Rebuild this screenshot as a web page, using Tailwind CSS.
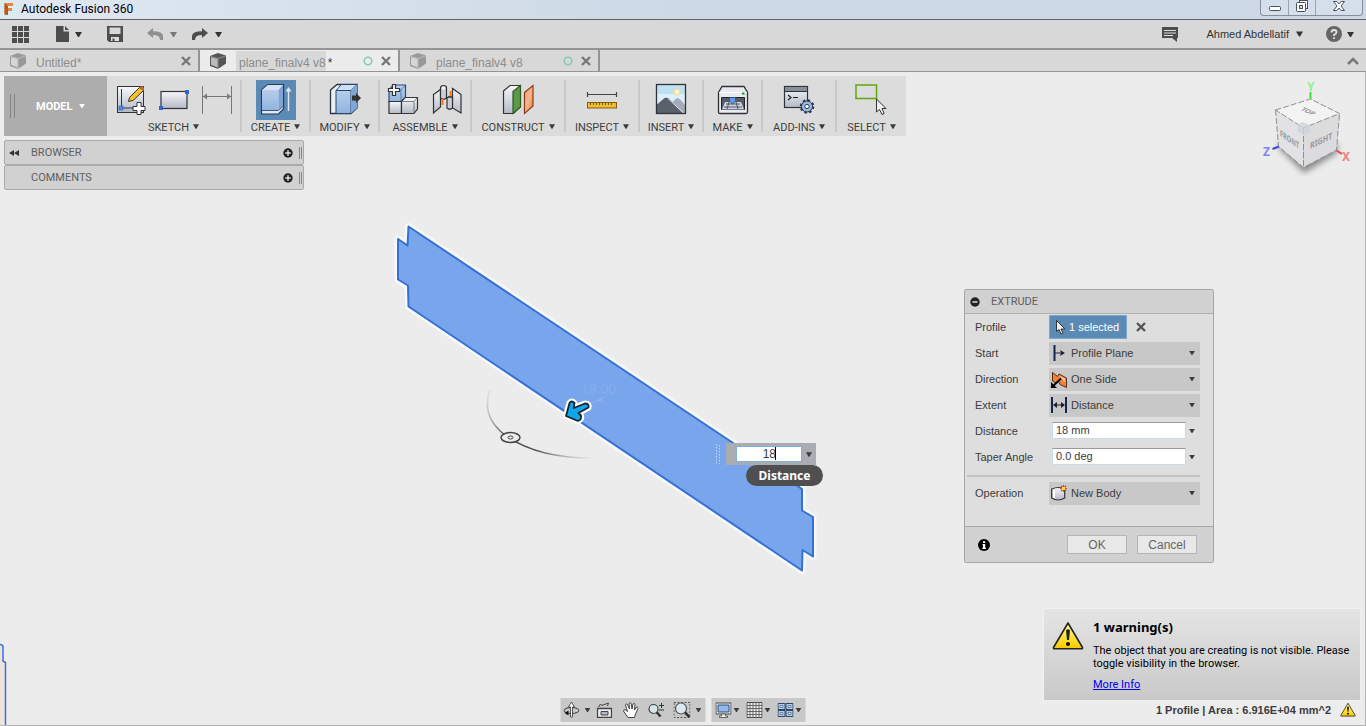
<!DOCTYPE html>
<html lang="en">
<head>
  <meta charset="UTF-8" />
  <meta name="viewport" content="width=device-width, initial-scale=1.0"/>
  <title>Autodesk Fusion 360</title>
  <script src="https://cdn.jsdelivr.net/npm/@tailwindcss/browser@4"></script>
</head>
<body class="h-screen flex flex-col overflow-hidden bg-[#ececec] text-[11px] text-[#3c3c3c] font-['Liberation_Sans',Arial,sans-serif]">

  <!-- shared symbols -->
  <svg class="absolute w-0 h-0">
    <symbol id="down" viewBox="0 0 7 5"><path d="M0 0h7L4 5H3z" fill="currentColor"/></symbol>
    <symbol id="cross" viewBox="0 0 10 10"><path d="M1 1l8 8M9 1l-8 8" stroke="currentColor" stroke-width="2.400"/></symbol>
    <symbol id="cube" viewBox="0 0 16 16">
      <path d="M0 3L8 0l8 2.500v8L8 16l-8-3z" fill="currentColor"/>
      <path d="M1 4.200l6.500 1.800v8.500L1 11.800z" fill="#fff" opacity=".6"/>
      <path d="M.5 3.500L8 5.500l7.500-2.500M8 5.500V16" stroke="#fff" stroke-opacity=".35" fill="none"/>
    </symbol>
    <symbol id="plus" viewBox="0 0 10 10"><circle cx="5" cy="5" r="4.700" fill="#222"/><path d="M5 2.200v5.600M2.200 5h5.600" stroke="#ddd" stroke-width="1.500"/></symbol>
    <symbol id="warn" viewBox="0 0 32 28">
      <path d="M16 1.500L30.500 26q.3 1.200-1 1.200h-27q-1.300 0-1-1.200z" fill="url(#yellow)" stroke="#222" stroke-width="1.600" stroke-linejoin="round"/>
      <path d="M14 9q2-2.500 4 0l-1 9.500h-2z" fill="#222"/><circle cx="16" cy="22.500" r="2.100" fill="#111"/>
    </symbol>
    <defs>
      <linearGradient id="yellow" x1="0" y1="0" x2="0" y2="1"><stop offset="0" stop-color="#fff7a0"/><stop offset=".6" stop-color="#ffe030"/><stop offset="1" stop-color="#f8c800"/></linearGradient>
      <linearGradient id="steel" x1="0" y1="0" x2="0" y2="1"><stop offset="0" stop-color="#f6f7fb"/><stop offset="1" stop-color="#b4b9c6"/></linearGradient>
      <linearGradient id="blue" x1="0" y1="0" x2="0" y2="1"><stop offset="0" stop-color="#b7cdec"/><stop offset="1" stop-color="#8fb5dd"/></linearGradient>
      <linearGradient id="orange" x1="0" y1="0" x2="1" y2="1"><stop offset="0" stop-color="#f0a070"/><stop offset=".5" stop-color="#f8b58c"/><stop offset="1" stop-color="#e67a3c"/></linearGradient>
    </defs>
  </svg>

  <!-- title bar -->
  <header class="shrink-0 flex items-start justify-between h-5 border-b border-[#5f6166] bg-linear-to-r from-[#dfe8f2] via-[#cdd9e6] to-[#ccd8e6] pr-[3px]">
    <div class="flex items-center gap-[5px] h-[18px]">
      <svg class="w-4 h-4 bg-[#d9ecf5]" viewBox="0 0 16 16"><path d="M4.500 2h8.500v3H8v2h4v3H8v4H4.500z" fill="#e8873a"/><path d="M4.500 2L8 5v9l-3.500-1z" fill="#b9581c"/></svg>
      <h1 class="text-xs text-black font-[Roboto,sans-serif]">Autodesk Fusion 360</h1>
    </div>
    <div class="flex h-4 rounded-b border border-t-0 border-[#868e9a] bg-[#d5dfeb]">
      <button class="w-7 h-full flex justify-center border-r border-[#9aa3b0]" aria-label="Minimize"><svg class="w-3 h-4" viewBox="0 0 12 16"><rect x=".5" y="6.500" width="11" height="4" rx="1" fill="#fff" stroke="#4b5057"/></svg></button>
      <button class="w-[27px] h-full flex justify-center border-r border-[#9aa3b0]" aria-label="Restore"><svg class="w-3 h-4" viewBox="0 0 12 16"><rect x="3.500" y="0.500" width="8" height="8" fill="#fff" stroke="#4b5057"/><rect x=".5" y="2.500" width="9" height="9" rx="1" fill="#fff" stroke="#4b5057"/><rect x="3.500" y="5.500" width="3" height="3" fill="#d5dfeb" stroke="#4b5057"/></svg></button>
      <button class="w-[46px] h-full flex justify-center" aria-label="Close"><svg class="w-3 h-4" viewBox="0 0 12 16"><path d="M.5 1.500h3.300L6 4l2.200-2.500h3.300L8 6l3.500 4.500H8.200L6 8l-2.200 2.500H.5L4 6z" fill="#fff" stroke="#4b5057"/></svg></button>
    </div>
  </header>

  <!-- application bar -->
  <nav class="shrink-0 flex items-center justify-between h-[30px] border-b-2 border-[#949494] bg-[#d8d8d8] px-3 text-[#333]">
    <div class="flex items-center">
      <button aria-label="Data panel"><svg class="w-[17px] h-[17px]" viewBox="0 0 17 17" fill="#4d4d4d"><path d="M0 0h5v5H0zM6 0h5v5H6zM12 0h5v5h-5zM0 6h5v5H0zM6 6h5v5H6zM12 6h5v5h-5zM0 12h5v5H0zM6 12h5v5H6zM12 12h5v5h-5z"/></svg></button>
      <button class="flex items-center gap-1.5 ml-[27px]" aria-label="File"><svg class="w-[13px] h-4" viewBox="0 0 13 16"><path d="M0 0h7.500v5.500H13V16H0zM9 0l4 4H9z" fill="#4d4d4d"/></svg><svg class="w-[7px] h-[5px]"><use href="#down"/></svg></button>
      <button class="ml-[25px]" aria-label="Save"><svg class="w-4 h-4" viewBox="0 0 16 16"><path d="M0 0h16v16H2l-2-2z" fill="#4d4d4d"/><path d="M2.500 1.500h11V8h-11z" fill="#d8d8d8"/><path d="M4 11h8v4H4z" fill="#ddd"/><path d="M5.500 12.500h2v2.500h-2z" fill="#4d4d4d"/></svg></button>
      <button class="flex items-center gap-[7px] ml-6 text-[#777]" aria-label="Undo"><svg class="w-4 h-3" viewBox="0 0 16 12"><path d="M0 5l6-5v3.200q10 0 10 4.800v4h-3q0-5-7-5v3z" fill="#909090"/></svg><svg class="w-[7px] h-[5px]"><use href="#down"/></svg></button>
      <button class="flex items-center gap-[7px] ml-[15px]" aria-label="Redo"><svg class="w-4 h-3" viewBox="0 0 16 12"><path d="M16 5l-6-5v3.200Q0 3.200 0 8v4h3q0-5 7-5v3z" fill="#4d4d4d"/></svg><svg class="w-[7px] h-[5px]"><use href="#down"/></svg></button>
    </div>
    <div class="flex items-center">
      <button aria-label="Notifications"><svg class="w-4 h-[15px]" viewBox="0 0 16 15"><path d="M0 0h16v11h-1v4l-5-4H0z" fill="#4d4d4d"/><path d="M2 3.500h12M2 6h12M2 8.500h9" stroke="#ddd"/></svg></button>
      <button class="flex items-center gap-[7px] ml-7">Ahmed Abdellatif <svg class="w-[7px] h-[6px]"><use href="#down"/></svg></button>
      <button class="flex items-center gap-[5px] ml-[23px]" aria-label="Help"><svg class="w-4 h-4" viewBox="0 0 16 16"><circle cx="8" cy="8" r="8" fill="#666"/><path d="M5.500 6.500Q5.500 4 8 4t2.500 2.300Q10.500 7.500 8 9v1M8 11.200v1.800" fill="none" stroke="#e2e2e2" stroke-width="1.800"/></svg><svg class="w-[7px] h-[5px]"><use href="#down"/></svg></button>
    </div>
  </nav>

  <!-- document tabs -->
  <div class="shrink-0 flex h-[22px] border-b border-[#949494] bg-[#d8d8d8] text-xs text-[#8c8c8c]">
    <div class="flex items-center w-[200px] border-r-2 border-[#949494] pl-[10px] pr-[7px]">
      <svg class="w-4 h-4 text-[#999]"><use href="#cube"/></svg>
      <a href="#" class="ml-[10px] pt-1">Untitled*</a>
      <button class="ml-auto text-[#777]" aria-label="Close tab"><svg class="w-[10px] h-[10px]"><use href="#cross"/></svg></button>
    </div>
    <div class="flex items-center w-[200px] border-r-2 border-[#949494] bg-[#ececec] pl-[10px] pr-[7px]">
      <svg class="w-4 h-4 text-[#555]"><use href="#cube"/></svg>
      <a href="#" class="ml-[10px] flex"><span class="bg-[#d8d8d8] pt-1 pl-[3px]">plane_finalv4 v8</span><span class="pt-1 pl-0.5 text-[#333]">*</span></a>
      <svg class="ml-auto w-[10px] h-[10px]" viewBox="0 0 10 10"><circle cx="5" cy="5" r="3.800" fill="none" stroke="#7fcbb8" stroke-width="1.500"/></svg>
      <button class="ml-2 text-[#777]" aria-label="Close tab"><svg class="w-[10px] h-[10px]"><use href="#cross"/></svg></button>
    </div>
    <div class="flex items-center w-[200px] border-r-2 border-[#949494] pl-[10px] pr-[7px]">
      <svg class="w-4 h-4 text-[#999]"><use href="#cube"/></svg>
      <a href="#" class="ml-[10px] pt-1">plane_finalv4 v8</a>
      <svg class="ml-auto w-[10px] h-[10px]" viewBox="0 0 10 10"><circle cx="5" cy="5" r="3.800" fill="none" stroke="#7fcbb8" stroke-width="1.500"/></svg>
      <button class="ml-2 text-[#777]" aria-label="Close tab"><svg class="w-[10px] h-[10px]"><use href="#cross"/></svg></button>
    </div>
    <button class="ml-auto mr-[7px]" aria-label="Collapse"><svg class="w-3 h-2" viewBox="0 0 12 8"><path d="M1 7l5-5 5 5" fill="none" stroke="#777" stroke-width="2.600"/></svg></button>
  </div>

  <!-- canvas -->
  <main class="relative grow min-h-0 overflow-hidden border-r border-b border-[#b4b4b4] p-1">

    <!-- model view -->
    <svg class="absolute inset-0 w-full h-full">
      <g transform="translate(0 -72)">
        <path d="M0 644l3 2v15l2.500 1.500V728H0z" fill="#ede4d9"/>
        <path d="M0 644l3 2v15l2.500 1.500V728" fill="none" stroke="#3f6fe0" stroke-width="1.500"/>
        <g stroke-linejoin="round">
          <path d="M408.500 226.500L802 489v21.500l11 6.500v39.500l-10.500-6.500-.5 20.500L408.500 306.500l-.5-21-10-6v-40.500l9.500 6.500z" fill="#fff" stroke="#f8f8fa" stroke-width="7"/>
          <path d="M408.500 226.500L802 489v21.500l11 6.500v39.500l-10.500-6.500-.5 20.500L408.500 306.500l-.5-21-10-6v-40.500l9.500 6.500z" fill="#78a5ec" stroke="#3472d2" stroke-width="2"/>
        </g>
        <text x="581" y="394" font-size="14" fill="#87aeed">18.00</text>
        <path d="M588 405l17-8" stroke="#8db3f0"/>
        <path d="M595 401l6-3 1 3z" fill="#8db3f0"/>
        <linearGradient id="arc" gradientUnits="userSpaceOnUse" x1="488" y1="390" x2="590" y2="458"><stop offset="0" stop-color="#888" stop-opacity=".1"/><stop offset=".35" stop-color="#444"/><stop offset=".6" stop-color="#555"/><stop offset="1" stop-color="#999" stop-opacity=".1"/></linearGradient>
        <path d="M490 390Q481 415 503 433.500Q535 458 592 458" fill="none" stroke="url(#arc)" stroke-width="1.500"/>
        <ellipse cx="510.500" cy="437.500" rx="9.500" ry="5" fill="#ececec" stroke="#444" stroke-width="1.500"/>
        <ellipse cx="510.500" cy="437.500" rx="2.500" ry="1.500" fill="none" stroke="#444"/>
        <path d="M566 416L569.500 403q2-3 5 0l-.8 5L585 403.500q4.500 0 3.500 4L578.500 413l2.500 2.500q1 4-3 5.500z" fill="#fff" stroke="#fff" stroke-width="6" stroke-linejoin="round"/>
        <path d="M566 416L569.500 403q2-3 5 0l-.8 5L585 403.500q4.500 0 3.500 4L578.500 413l2.500 2.500q1 4-3 5.500z" fill="#0fa5e9" stroke="#15242e" stroke-width="1.800" stroke-linejoin="round"/>
      </g>
    </svg>

    <!-- view cube -->
    <svg class="absolute top-1 right-[10px] w-[95px] h-[110px]" viewBox="1260 76 95 110">
      <filter id="soft"><feGaussianBlur stdDeviation="3"/></filter>
      <path d="M1279 148l25 25 33-20v-10h-58z" fill="#888" filter="url(#soft)"/>
      <path d="M1275.500 110l35-11 29 14.500-36 14.500z" fill="#f3f3f3"/>
      <path d="M1275.500 110l28 18v39.500l-25-21z" fill="#e2e2e4"/>
      <path d="M1339.500 113.500l-36 14.500v39.500l33-17.500z" fill="#dcdcde"/>
      <path d="M1275.500 110l35-11 29 14.500-36 14.500zM1275.500 110l3 36.500 25 21 33-17.500 3-36.500M1303.500 128v39.500" fill="none" stroke="#909090" stroke-dasharray="6 2"/>
      <path d="M1297.500 124l5.500-2 7 3v8l-6 2-6.500-3.500z" fill="#cfd3da" opacity=".8"/>
      <g font-family="Noto Sans,sans-serif" font-weight="bold" font-size="8" fill="#999">
        <text transform="matrix(.7 .48 0 1.100 1280 136)">FRONT</text>
        <text transform="matrix(.9 -.42 0 1.100 1310 149)">RIGHT</text>
        <text transform="matrix(.8 .35 -.7 .5 1300 110)">TOP</text>
      </g>
      <path d="M1310.500 99v-7" stroke="#3fe03f" stroke-width="2"/>
      <path d="M1279 146.500l-6.500 2.500" stroke="#4444dd" stroke-width="2"/>
      <path d="M1336.500 150.500l5.500 3.500" stroke="#ee4444" stroke-width="2"/>
      <g font-family="Noto Sans,sans-serif" font-size="12" font-weight="bold">
        <text x="1307" y="91" fill="#8af58a">Y</text><text x="1263" y="156" fill="#8484f0">Z</text><text x="1342" y="161" fill="#f58080">X</text>
      </g>
    </svg>

    <!-- ribbon -->
    <div class="relative w-fit flex h-[60px] bg-[#dcdcdc] font-[Roboto,sans-serif]">
      <button class="flex items-center w-[103px] bg-[#adadad] text-white font-bold pl-1.5">
        <span class="w-[5px] h-6 border-x border-[#858585]"></span>
        <span class="ml-[21px] pt-0.5">MODEL</span><svg class="ml-[6px] w-[6px] h-1"><use href="#down"/></svg>
      </button>
      <div class="flex flex-col items-center w-[133px] my-1">
        <div class="flex gap-2">
          <svg class="w-9 h-10" viewBox="0 0 36 40">
            <rect x="5.500" y="6.500" width="26" height="26" fill="url(#steel)" stroke="#2f3238"/>
            <path d="M9.500 9v19H29" fill="none" stroke="#333"/><rect x="7" y="26" width="4" height="4" fill="#4a90e8" stroke="#1c4fa0" stroke-width=".5"/>
            <path d="M16.500 21.500l1-4L28 7l3.500 3.500L21 20.500z" fill="#f3c42c" stroke="#3c3020"/><path d="M27 8l1.500-1.500q2-1 3 .5t.5 3L31 11z" fill="#b96a30"/>
            <path d="M25 22.500h4v4h4v4h-4v4h-4v-4h-4v-4h4z" fill="#fff" stroke="#333"/>
          </svg>
          <svg class="w-9 h-10" viewBox="0 0 36 40"><rect x="5" y="11.500" width="26" height="17" fill="url(#steel)" stroke="#2f3238" stroke-width="1.200"/><path d="M29 10h4v4h-4zM3 26h4v4H3z" fill="#2f66d0"/></svg>
          <svg class="w-9 h-10" viewBox="0 0 36 40"><path d="M2.500 6v28M31.500 6v28M3 16.500h28" stroke="#777"/><path d="M3 16.500l4-3v6zM31 16.500l-4-3v6z" fill="#777"/></svg>
        </div>
        <button class="flex items-start gap-1 leading-4">SKETCH <svg class="mt-1 w-[6px] h-[5px]"><use href="#down"/></svg></button>
      </div>
      <div class="flex flex-col items-center w-[69px] my-1 border-l-2 border-[#c9c9c9]">
        <svg class="shrink-0 w-10 h-10 bg-[#5b8bb5]" viewBox="0 0 40 40">
          <path d="M5.500 10L12 4.500h15.500V29l-5 5h-17z" fill="#e4e7ee" stroke="#223c66" stroke-width="1.200"/>
          <path d="M6 10l6-5h15l-4.500 5z" fill="#d4e2f6"/><path d="M6 10h16.500v20H6z" fill="url(#blue)"/><path d="M22.500 10L27 5v21l-4.500 4z" fill="#7da4d2"/><path d="M6 30.500h16.500l5-4.500" fill="none" stroke="#3a5580"/>
          <path d="M32.500 31V10" stroke="#e2e6ec" stroke-width="1.500"/><path d="M32.500 7l3 4.500h-6z" fill="#e2e6ec"/>
        </svg>
        <button class="flex items-start gap-1 leading-4">CREATE <svg class="mt-1 w-[6px] h-[5px]"><use href="#down"/></svg></button>
      </div>
      <div class="flex flex-col items-center w-[69px] my-1 border-l-2 border-[#c9c9c9]">
        <svg class="shrink-0 w-10 h-10" viewBox="0 0 40 40">
          <path d="M5.500 10L12 4.500h20V28l-6 5.500H5.500z" fill="#eceef3" stroke="#2b3442" stroke-width="1.300"/>
          <path d="M11 10.500l5.500-6H32L26 10.500z" fill="#cfe0f5" stroke="#27466f"/><path d="M11 10.500h15v23H11z" fill="url(#blue)" stroke="#27466f"/><path d="M26 10.500l6-6V28l-6 5.500z" fill="#7fa6d6"/>
          <path d="M27 15.500h4V13l5 5-5 5v-2.500h-4z" fill="#333"/>
        </svg>
        <button class="flex items-start gap-1 leading-4">MODIFY <svg class="mt-1 w-[6px] h-[5px]"><use href="#down"/></svg></button>
      </div>
      <div class="flex flex-col items-center w-[92px] my-1 border-l-2 border-[#c9c9c9]">
        <div class="flex gap-1">
          <svg class="w-10 h-10" viewBox="0 0 40 40" stroke-width="1.200">
            <path d="M6 10l4-5h12.500v13L18 22H6z" fill="url(#blue)" stroke="#2a4a86"/><path d="M18 10l4.500-5M18 10v12M6 10h12" stroke="#2a4a86" fill="none" stroke-width=".6"/>
            <path d="M6 21.500h12.500v12H6z" fill="url(#steel)" stroke="#333"/><path d="M18.500 21.500L22 17.500h12.500V29L31 33.500H18.500z" fill="url(#steel)" stroke="#333"/><path d="M18.500 21.500H31v12M31 21.500l3.500-4" fill="none" stroke="#666" stroke-width=".8"/>
            <path d="M9.500 4.500h3v4h4v3h-4v4h-3v-4h-4v-3h4z" fill="#fff" stroke="#333"/>
          </svg>
          <svg class="w-10 h-10" viewBox="0 0 40 40" stroke="#333" stroke-width="1.200">
            <path d="M6.500 14.500l7-5v17.500l-7 6z" fill="url(#steel)"/><path d="M13.500 8q0-2.500 3-2.500t3 2.500v10q-3 2.500-6 0z" fill="#c9ced8"/>
            <path d="M34 14.500l-8.500-6V28l8.500 5z" fill="url(#steel)"/><path d="M20 18q3-2.500 5.500 0v10q-3 2.500-5.500 0z" fill="#c9ced8"/>
            <path d="M15.500 19v6M23.500 11v5" stroke="#f0781e" stroke-width="2"/><circle cx="16.500" cy="8" r="1.500" fill="#fff" stroke="none"/>
          </svg>
        </div>
        <button class="flex items-start gap-1 leading-4">ASSEMBLE <svg class="mt-1 w-[6px] h-[5px]"><use href="#down"/></svg></button>
      </div>
      <div class="flex flex-col items-center w-[94px] my-1 border-l-2 border-[#c9c9c9]">
        <svg class="shrink-0 w-10 h-10" viewBox="0 0 40 40" stroke-width="1.200">
          <path d="M5.500 11L12 5.500h10V27l-6.500 6.500h-10z" fill="url(#steel)" stroke="#333"/><path d="M15 11.500l7.500-6V27L15 33.500z" fill="#5a9a48" stroke="#2c5a20"/>
          <path d="M26.500 12.500L35 5.500V26l-8.500 7.500z" fill="url(#orange)" stroke="#8a3c18"/>
        </svg>
        <button class="flex items-start gap-1 leading-4">CONSTRUCT <svg class="mt-1 w-[6px] h-[5px]"><use href="#down"/></svg></button>
      </div>
      <div class="flex flex-col items-center w-[74px] my-1 border-l-2 border-[#c9c9c9]">
        <svg class="shrink-0 w-10 h-10" viewBox="0 0 40 40"><path d="M5.500 12v5M34.500 12v5M5.500 14.500h29" stroke="#444" stroke-width="1.200"/><rect x="5.500" y="22.500" width="29" height="5.500" fill="#eebd35" stroke="#835c12"/><path d="M8.500 23v2M11.500 23v2M14.500 23v2M17.500 23v2M20.500 23v2M23.500 23v2M26.500 23v2M29.500 23v2" stroke="#835c12"/></svg>
        <button class="flex items-start gap-1 leading-4">INSPECT <svg class="mt-1 w-[6px] h-[5px]"><use href="#down"/></svg></button>
      </div>
      <div class="flex flex-col items-center w-[64px] my-1 border-l-2 border-[#c9c9c9]">
        <svg class="shrink-0 w-10 h-10" viewBox="0 0 40 40">
          <rect x="5.500" y="4.500" width="29" height="29" fill="#bfe0f3"/><path d="M5.500 14h29v10h-29z" fill="#dceffa"/><circle cx="26" cy="12" r="3" fill="#fff6cc" stroke="#f5d77c"/>
          <path d="M17 26l9-8q3 0 8.500 8v7.500H17z" fill="#a3acb8"/><path d="M5.500 25l8-7q3-1 5 1l14 14.500H5.500z" fill="#59616d"/><path d="M17 18.500l16 15" stroke="#e5eaf0"/>
          <rect x="5.500" y="4.500" width="29" height="29" fill="none" stroke="#2f3238" stroke-width="1.300"/>
        </svg>
        <button class="flex items-start gap-1 leading-4">INSERT <svg class="mt-1 w-[6px] h-[5px]"><use href="#down"/></svg></button>
      </div>
      <div class="flex flex-col items-center w-[59px] my-1 border-l-2 border-[#c9c9c9]">
        <svg class="shrink-0 w-10 h-10" viewBox="0 0 40 40">
          <path d="M9 6.500h22l3.500 6V32q0 1.500-1.500 1.500H7q-1.500 0-1.500-1.500V12.500z" fill="#e8eaf0" stroke="#2f3238" stroke-width="1.300"/><path d="M6 12.500h28" stroke="#fff"/><path d="M29 12.500h2.500v2H29z" fill="#1f9a1f"/>
          <path d="M8.500 17.500h23v12h-23z" fill="#555b66" stroke="#222"/><path d="M12 22h16l3 7.500H9z" fill="#cdd5e2"/><path d="M16.500 17.500h6v4L19.500 24l-3-2.500z" fill="#5f9be6" stroke="#1f4c90" stroke-width=".7"/><path d="M13 24h14M11 27h18M16 22l-2 7M23 22l2 7" stroke="#333a46" stroke-width=".8"/>
        </svg>
        <button class="flex items-start gap-1 leading-4">MAKE <svg class="mt-1 w-[6px] h-[5px]"><use href="#down"/></svg></button>
      </div>
      <div class="flex flex-col items-center w-[74px] my-1 border-l-2 border-[#c9c9c9]">
        <svg class="shrink-0 w-10 h-10" viewBox="0 0 40 40">
          <rect x="5.500" y="6.500" width="23" height="21" fill="url(#steel)" stroke="#2f3238" stroke-width="1.200"/><path d="M6 7h22v4H6z" fill="#878d99"/><path d="M6 11.500h22" stroke="#2f3238"/><path d="M9 15l3 2.500L9 20M14 17.500h5" fill="none" stroke="#222" stroke-width="1.200"/>
          <circle cx="28" cy="26.500" r="5.500" fill="#8db0dc" stroke="#2a3a55"/><circle cx="28" cy="26.500" r="6" fill="none" stroke="#2a3a55" stroke-width="2.500" stroke-dasharray="2.400 2.300"/><circle cx="28" cy="26.500" r="4.800" fill="#9dbce4"/><circle cx="28" cy="26.500" r="2.200" fill="#fff" stroke="#2a3a55"/>
        </svg>
        <button class="flex items-start gap-1 leading-4">ADD-INS <svg class="mt-1 w-[6px] h-[5px]"><use href="#down"/></svg></button>
      </div>
      <div class="flex flex-col items-center w-[71px] my-1 border-l-2 border-[#c9c9c9]">
        <svg class="shrink-0 w-10 h-10" viewBox="0 0 40 40"><rect x="4" y="5" width="20.500" height="13.500" fill="none" stroke="#5ca80e" stroke-width="1.500"/><path d="M24.500 19v13l3-2.500 2.500 5 2.200-1-2.200-5H34z" fill="#eef0f4" stroke="#333"/></svg>
        <button class="flex items-start gap-1 leading-4">SELECT <svg class="mt-1 w-[6px] h-[5px]"><use href="#down"/></svg></button>
      </div>
    </div>

    <!-- browser and comments bars -->
    <div class="relative w-[300px] mt-1 font-[Roboto,sans-serif] text-[#606060]">
      <div class="flex items-center h-[25px] border border-[#aaa] rounded-xs bg-[#d1d1d1] pl-1 pr-px">
        <svg class="w-[10px] h-[6px]" viewBox="0 0 10 6"><path d="M5 0v6L0 3zM10 0v6L5 3z" fill="#333"/></svg>
        <span class="ml-3 pt-0.5">BROWSER</span>
        <button class="ml-auto" aria-label="Expand browser"><svg class="w-[10px] h-[10px]"><use href="#plus"/></svg></button>
        <span class="ml-[6px] w-[3px] h-3 border-x border-[#888]"></span>
      </div>
      <div class="flex items-center h-[25px] border border-[#aaa] rounded-xs bg-[#d1d1d1] pl-[26px] pr-px">
        <span class="pt-0.5">COMMENTS</span>
        <button class="ml-auto" aria-label="Expand comments"><svg class="w-[10px] h-[10px]"><use href="#plus"/></svg></button>
        <span class="ml-[6px] w-[3px] h-3 border-x border-[#888]"></span>
      </div>
    </div>

    <!-- on-canvas value box -->
    <div class="absolute left-[715px] top-[371px] flex items-center">
      <svg class="w-[5px] h-5" viewBox="0 0 5 20"><path d="M1.500 0v20M4.500 1v19" stroke="#c3d4ee" stroke-dasharray="1.500 1.500"/></svg>
      <div class="ml-1.5 flex items-center h-[22px] bg-[#a9acb2] pl-[10px]">
        <input type="text" value="18" aria-label="Distance" class="w-[66px] h-4 bg-white border border-[#7fb0dc] text-xs text-right pr-[25px] outline-none" />
        <button class="w-[14px] flex justify-center" aria-label="Options"><svg class="w-[6px] h-[5px]"><use href="#down"/></svg></button>
      </div>
    </div>
    <div class="absolute left-[775px] top-[375px] w-px h-[13px] bg-black"></div>
    <div class="absolute left-[746px] top-[393px] w-[77px] h-[21px] rounded-full bg-[#4f4f4f] text-white text-xs leading-[21px] text-center font-bold font-['Noto_Sans',sans-serif]">Distance</div>

    <!-- extrude dialog -->
    <form class="absolute right-[151px] top-[217px] w-[250px] border border-[#a6a6a6] rounded-xs bg-[#dedede]">
      <div class="flex items-center h-6 bg-[#d1d1d1] border-b border-[#b0b0b0] pl-[5px] font-[Roboto,sans-serif] text-[#606060]">
        <svg class="w-[10px] h-[10px]" viewBox="0 0 10 10"><circle cx="5" cy="5" r="4.700" fill="#222"/><path d="M2.500 5h5" stroke="#ddd" stroke-width="1.500"/></svg>
        <h2 class="ml-[11px] pt-0.5">EXTRUDE</h2>
      </div>
      <div class="pl-[10px] pr-[13px]">
        <div class="flex items-center h-[26px]">
          <span class="w-[74px]">Profile</span>
          <button type="button" class="flex items-center gap-[3px] w-[78px] h-6 pl-1.5 bg-[#5b8bb5] border border-[#7ba7cd] text-white"><svg class="w-[10px] h-[15px]" viewBox="0 0 10 15"><path d="M.5 .5v11l2.500-2 2 4.500 2-1-2-4H9z" fill="#eef0f4" stroke="#333"/></svg>1 selected</button>
          <button type="button" class="ml-[9px] text-[#555]" aria-label="Clear"><svg class="w-[10px] h-[10px]"><use href="#cross"/></svg></button>
        </div>
        <div class="flex items-center h-[26px]">
          <label for="start" class="w-[74px]">Start</label>
          <div class="relative grow">
            <select id="start" class="block appearance-none w-full h-[23px] bg-[#c8c8c8] pl-[22px]"><option>Profile Plane</option></select>
            <svg class="absolute left-[2px] top-[3px] w-4 h-4" viewBox="0 0 16 16"><path d="M3.500 0v16" stroke="#12264f" stroke-width="2"/><path d="M4 8h8" stroke="#12264f"/><path d="M9 5l5 3-5 3 1-3z" fill="#222"/></svg>
            <svg class="absolute right-[5px] top-[9px] w-[6px] h-1"><use href="#down"/></svg>
          </div>
        </div>
        <div class="flex items-center h-[26px]">
          <label for="direction" class="w-[74px]">Direction</label>
          <div class="relative grow">
            <select id="direction" class="block appearance-none w-full h-[23px] bg-[#c8c8c8] pl-[22px]"><option>One Side</option></select>
            <svg class="absolute left-[2px] top-[4px] w-4 h-4" viewBox="0 0 16 16"><path d="M1.500 .5l5 4L8 2l7.500 4v9.500L9 12.500 7 9l-2 2-3.500-2z" fill="#f0833c" stroke="#5a2c14"/><path d="M8 3.500l6 3v4z" fill="#ffc49a"/><path d="M10 6.500L2 14" stroke="#000" stroke-width="1.800"/><path d="M0 16v-6l6 6z" fill="#000"/></svg>
            <svg class="absolute right-[5px] top-[9px] w-[6px] h-1"><use href="#down"/></svg>
          </div>
        </div>
        <div class="flex items-center h-[26px]">
          <label for="extent" class="w-[74px]">Extent</label>
          <div class="relative grow">
            <select id="extent" class="block appearance-none w-full h-[23px] bg-[#c8c8c8] pl-[22px]"><option>Distance</option></select>
            <svg class="absolute left-[2px] top-[3px] w-4 h-4" viewBox="0 0 16 16"><path d="M1 0v16M15 0v16" stroke="#12264f" stroke-width="2"/><path d="M3 8h10" stroke="#222"/><path d="M2 8l4-3v6zM14 8l-4-3v6z" fill="#222"/></svg>
            <svg class="absolute right-[5px] top-[9px] w-[6px] h-1"><use href="#down"/></svg>
          </div>
        </div>
        <div class="flex items-center h-[26px]">
          <label for="distance" class="w-[77px]">Distance</label>
          <input id="distance" type="text" value="18 mm" class="mb-0.5 w-[134px] h-[17px] bg-white border border-t-[#999] border-[#ccdae6] pl-[3px] outline-none" />
          <svg class="ml-[3px] w-[6px] h-1"><use href="#down"/></svg>
        </div>
        <div class="flex items-center h-[26px]">
          <label for="taper" class="w-[77px]">Taper Angle</label>
          <input id="taper" type="text" value="0.0 deg" class="mb-0.5 w-[134px] h-[17px] bg-white border border-t-[#999] border-[#ccdae6] pl-[3px] outline-none" />
          <svg class="ml-[3px] w-[6px] h-1"><use href="#down"/></svg>
        </div>
        <hr class="mt-[5px] mb-[3px] -ml-2 border-t-2 border-[#c2c2c2]" />
        <div class="flex items-center h-[26px]">
          <label for="operation" class="w-[74px]">Operation</label>
          <div class="relative grow">
            <select id="operation" class="block appearance-none w-full h-[23px] bg-[#c8c8c8] pl-[22px]"><option>New Body</option></select>
            <svg class="absolute left-[2px] top-[3px] w-4 h-4" viewBox="0 0 16 16"><path d="M.7 4v9q6 4 13 0V4q-6-3-13 0z" fill="url(#steel)" stroke="#333" stroke-width="1.200"/><path d="M3 5v8" stroke="#fff" stroke-width="2"/><path d="M12.500 0v7M9 3.500h7M10 1l5 5M15 1l-5 5" stroke="#e0341c" stroke-width="1.200"/><circle cx="12.500" cy="3.500" r="1.800" fill="#ffe03a"/></svg>
            <svg class="absolute right-[5px] top-[9px] w-[6px] h-1"><use href="#down"/></svg>
          </div>
        </div>
      </div>
      <div class="flex items-center h-[36px] mt-5 border-t border-[#a6a6a6] bg-[#d1d1d1] pl-[13px] pr-4 text-xs text-[#666]">
        <svg class="w-3 h-3" viewBox="0 0 12 12"><circle cx="6" cy="6" r="6" fill="#000"/><path d="M5 2.200h2.200v1.800H5zM4.500 5h2.700v3.800H8V10H4.300V8.800H5V6.200h-.5z" fill="#fff"/></svg>
        <button type="button" class="ml-auto w-[60px] h-[19px] border border-[#b4b4b4] bg-[#e8e8e8] leading-none">OK</button>
        <button type="button" class="ml-[10px] w-[60px] h-[19px] border border-[#b4b4b4] bg-[#e8e8e8] leading-none">Cancel</button>
      </div>
    </form>

    <!-- warning -->
    <div class="absolute right-1 bottom-6 w-[318px] h-[93px] flex border border-[#f0f0f0] rounded-xs bg-linear-to-b from-[#e4e4e4] to-[#c9c9c9] pl-2 text-black font-[Roboto,sans-serif]">
      <svg class="shrink-0 mt-3 w-8 h-[29px]"><use href="#warn"/></svg>
      <div class="ml-[9px] leading-[13px]">
        <h2 class="mt-3 text-[13px] font-bold font-['Noto_Sans',sans-serif]">1 warning(s)</h2>
        <p class="mt-[10px] whitespace-nowrap">The object that you are creating is not visible. Please<br>toggle visibility in the browser.</p>
        <a href="#" class="block w-fit mt-2 text-[#0000f0] underline">More Info</a>
      </div>
    </div>
    <div class="absolute right-[9px] bottom-[7px] flex items-center gap-[9px] font-bold">
      <span>1 Profile | Area : 6.916E+04 mm^2</span>
      <svg class="w-4 h-[15px]"><use href="#warn"/></svg>
    </div>

    <!-- navigation bar -->
    <div class="absolute bottom-[3px] left-1/2 -translate-x-1/2 flex gap-1.5">
      <div class="flex items-center w-[145px] h-6 bg-[#c8c8c8] pl-[3px]">
        <button class="flex items-center gap-[5px]" aria-label="Orbit"><svg class="w-4 h-4" viewBox="0 0 16 16"><ellipse cx="8" cy="8.500" rx="7.500" ry="3" fill="none" stroke="#333"/><path d="M7 15V5H5l3-5 3 5H9v10z" fill="#fff" stroke="#333" stroke-width=".8"/><path d="M1 11l4-2.500v5z" fill="#111"/></svg><svg class="w-[6px] h-1"><use href="#down"/></svg></button>
        <button class="ml-[6px]" aria-label="Look at"><svg class="w-4 h-4" viewBox="0 0 16 16"><path d="M1 6.500h14v9H1z" fill="#eee" stroke="#444" stroke-width="1.300"/><path d="M4.500 9.500h7v3.500h-7z" fill="#aeb8c6" stroke="#444"/><path d="M2 5l2-3 1 1.500L12 1l-1 3" fill="none" stroke="#444"/></svg></button>
        <button class="ml-[10px]" aria-label="Pan"><svg class="w-4 h-4" viewBox="0 0 16 16"><path d="M5.500 15.500L1 9q0-2 2-1l2 1.500L3 3q.5-2 2-.500L7 7 6.500 1.500q1.200-1.500 2.200 0L9.500 7l1-5q1.500-1.500 2 .3L12 8l2-3q1.700-.5 1.500 1.500L13 12l-1 3.500z" fill="#fff" stroke="#333" stroke-width=".9"/></svg></button>
        <button class="ml-[9px]" aria-label="Zoom"><svg class="w-[17px] h-4" viewBox="0 0 17 16"><circle cx="6" cy="7" r="4.500" fill="#d4e5ec" stroke="#444" stroke-width="1.200"/><path d="M9 10l4 4.500" stroke="#333" stroke-width="2.500"/><path d="M14 1v5M11.500 3.500h5M11.500 8h5" stroke="#333"/></svg></button>
        <button class="ml-[9px] flex items-center gap-[5px]" aria-label="Fit"><svg class="w-[17px] h-4" viewBox="0 0 17 16"><path d="M.5 .5h16v15H.5z" fill="none" stroke="#555" stroke-dasharray="2 1.500"/><circle cx="7.500" cy="6.500" r="5.500" fill="#dceaf0" stroke="#555" stroke-width="1.200"/><path d="M11.500 10.500l4.500 4.500" stroke="#333" stroke-width="2.500"/></svg><svg class="w-[6px] h-1"><use href="#down"/></svg></button>
      </div>
      <div class="flex items-center justify-center gap-[7px] w-[94px] h-6 bg-[#c8c8c8]">
        <button class="flex items-center gap-0.5" aria-label="Display"><svg class="w-4 h-4" viewBox="0 0 16 16"><path d="M.5 1h15v11H.5z" fill="#eee" stroke="#444"/><path d="M2.500 3h11v7h-11z" fill="#94b8e8" stroke="#2f4f80"/><path d="M6 12h4v2h2v1.500H4V14h2z" fill="#eee" stroke="#444" stroke-width=".8"/></svg><svg class="w-[6px] h-1"><use href="#down"/></svg></button>
        <button class="flex items-center gap-0.5" aria-label="Grid"><svg class="w-4 h-4" viewBox="0 0 16 16"><path d="M.5 .5h15v15H.5z" fill="#eee" stroke="#444"/><path d="M3.500 0v16M6.500 0v16M9.500 0v16M12.500 0v16M0 3.500h16M0 6.500h16M0 9.500h16M0 12.500h16" stroke="#666"/></svg><svg class="w-[6px] h-1"><use href="#down"/></svg></button>
        <button class="flex items-center gap-0.5" aria-label="Viewports"><svg class="w-4 h-4" viewBox="0 0 16 16"><path d="M.5 1.500h7v6h-7zM8.500 1.500h7v6h-7zM.5 8.500h7v6h-7zM8.500 8.500h7v6h-7z" fill="#b3cbea" stroke="#2f4566"/><path d="M2.500 3.500h3v2h-3zM10.500 3.500h3v2h-3zM2.500 10.500h3v2h-3zM10.500 10.500h3v2h-3z" fill="#d5e3f5" stroke="#4a6694" stroke-width=".7"/></svg><svg class="w-[6px] h-1"><use href="#down"/></svg></button>
      </div>
    </div>
  </main>

</body>
</html>
